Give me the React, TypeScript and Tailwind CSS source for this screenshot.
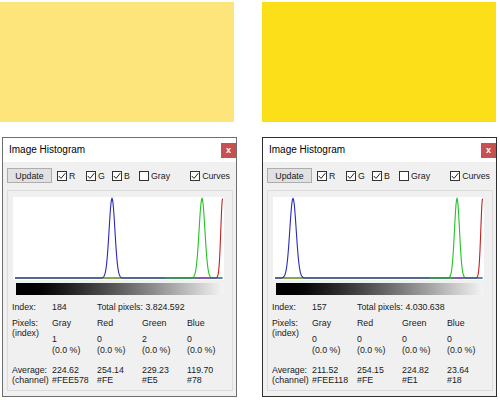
import React from 'react';

type Peak = { c: number; s: number };

type HistData = {
  index: string;
  total: string;
  counts: string[];
  avg: string[];
  hex: string[];
  blue: Peak;
  green: Peak;
  red: Peak;
  greenRun: [number, number];
  border: string;
};

const PLOT_W = 211;
const BASE = 81;

// builds a gaussian-ish curve along the plot baseline
function curve(p: Peak, from = 2, to = 209.5) {
  const pts: string[] = [];
  for (let x = from; x <= to; x += 0.5) {
    const y = BASE - (BASE - 1.5) * Math.exp(-((x - p.c) ** 2) / (2 * p.s * p.s));
    pts.push(`${x.toFixed(1)},${y.toFixed(2)}`);
  }
  return pts.join(' ');
}

const LEFT: HistData = {
  index: '184',
  total: 'Total pixels: 3.824.592',
  counts: ['1', '0', '2', '0'],
  avg: ['224.62', '254.14', '229.23', '119.70'],
  hex: ['#FEE578', '#FE', '#E5', '#78'],
  blue: { c: 99, s: 2.9 },
  green: { c: 189, s: 2.9 },
  red: { c: 209.6, s: 1.8 },
  greenRun: [152, 182],
  border: 'border-[#6e6e6e]',
};

const RIGHT: HistData = {
  index: '157',
  total: 'Total pixels: 4.030.638',
  counts: ['0', '0', '0', '0'],
  avg: ['211.52', '254.15', '224.82', '23.64'],
  hex: ['#FEE118', '#FE', '#E1', '#18'],
  blue: { c: 20, s: 3.2 },
  green: { c: 184, s: 2.5 },
  red: { c: 209.6, s: 1.8 },
  greenRun: [157, 180],
  border: 'border-[#2f2f2f]',
};

const Check = ({ on }: { on: boolean }) => (
  <span className="flex h-[10px] w-[10px] shrink-0 items-center justify-center border border-[#333333] bg-white">
    {on && (
      <svg width="8" height="8" viewBox="0 0 8 8">
        <path d="M0.8 4 L3 6.4 L7.3 1.2" fill="none" stroke="#222222" strokeWidth="1" />
      </svg>
    )}
  </span>
);

const CheckItem = ({ on, label, w }: { on: boolean; label: string; w: string }) => (
  <div className={`flex items-center gap-[2px] ${w}`}>
    <Check on={on} />
    <span>{label}</span>
  </div>
);

const Plot = ({ d }: { d: HistData }) => (
  <svg width={PLOT_W} height={83} viewBox={`0 0 ${PLOT_W} 83`} className="block bg-white">
    <polyline points={curve(d.red)} fill="none" stroke="#c42020" strokeWidth="1.1" />
    <polyline points={curve(d.green)} fill="none" stroke="#22c422" strokeWidth="1.1" />
    <polyline points={curve(d.blue)} fill="none" stroke="#2a2ac0" strokeWidth="1.1" />
    <line x1={d.greenRun[0]} y1={BASE} x2={d.greenRun[1]} y2={BASE} stroke="#22c422" strokeWidth="1" />
  </svg>
);

const HistogramWindow = ({ d, className }: { d: HistData; className?: string }) => {
  const cols = ['Gray', 'Red', 'Green', 'Blue'];
  return (
    <div className={`flex h-[260px] w-[235px] flex-col border ${d.border} bg-[#f0f0f0] ${className ?? ''}`}>
      <div className="flex h-[24px] items-start justify-between bg-white">
        <span className="mt-[6px] pl-[6px] text-[10px] leading-[12px] text-black">Image Histogram</span>
        <div className="mt-[5px] flex h-[15px] w-[15px] items-center justify-center bg-[#c75050] text-[9px] font-bold leading-none text-white">
          x
        </div>
      </div>
      <div className="flex flex-col pt-[6px] text-[8.8px] leading-[10px] text-[#1a1a1a]">
        <div className="flex h-[15px] items-center pl-[4px] pr-[6px]">
          <div className="flex h-[15px] w-[45px] items-center justify-center border border-[#adadad] bg-[#e1e1e1]">
            Update
          </div>
          <div className="ml-[5px] flex flex-1 items-center">
            <CheckItem on label="R" w="w-[29px]" />
            <CheckItem on label="G" w="w-[26px]" />
            <CheckItem on label="B" w="w-[27px]" />
            <CheckItem on={false} label="Gray" w="flex-1" />
            <CheckItem on label="Curves" w="" />
          </div>
        </div>
        <div className="ml-[4px] mt-[7px] flex w-[226px] flex-col border border-[#dcdcdc] pb-[5px] pt-[6px]">
          <div className="ml-[5px]">
            <Plot d={d} />
          </div>
          <div className="ml-[8px] mt-[3px] h-[12px] w-[207px] bg-linear-to-r from-black to-[#f4f4f4]" />
          <div className="ml-[4px] mt-[7px] grid grid-cols-[40px_45px_45px_45px_45px]">
            <span>Index:</span>
            <span>{d.index}</span>
            <span className="col-span-3 whitespace-nowrap">{d.total}</span>
          </div>
          <div className="ml-[4px] mt-[6px] grid grid-cols-[40px_45px_45px_45px_45px]">
            <div className="flex flex-col">
              <span>Pixels:</span>
              <span>(index)</span>
            </div>
            {cols.map((c, i) => (
              <div key={c} className="flex flex-col">
                <span>{c}</span>
                <span className="mt-[6px] leading-[11px]">{d.counts[i]}</span>
                <span className="leading-[11px]">(0.0 %)</span>
              </div>
            ))}
          </div>
          <div className="ml-[4px] mt-[9px] grid grid-cols-[40px_45px_45px_45px_45px]">
            <div className="flex flex-col whitespace-nowrap">
              <span>Average:</span>
              <span>(channel)</span>
            </div>
            {cols.map((c, i) => (
              <div key={c} className="flex flex-col">
                <span>{d.avg[i]}</span>
                <span>{d.hex[i]}</span>
              </div>
            ))}
          </div>
        </div>
      </div>
    </div>
  );
};

export default function App() {
  return (
    <div className="flex h-[402px] w-[500px] bg-white font-['Liberation_Sans',Arial,sans-serif]">
      <div className="flex w-[238px] flex-col">
        <div className="mt-[2px] h-[120px] w-[234px] bg-[#fde57b]" />
        <HistogramWindow d={LEFT} className="ml-[2px] mt-[15px]" />
      </div>
      <div className="ml-[24px] flex w-[236px] flex-col">
        <div className="mt-[2px] h-[120px] w-[234px] bg-[#fcdf18]" />
        <HistogramWindow d={RIGHT} className="mt-[15px]" />
      </div>
    </div>
  );
}
